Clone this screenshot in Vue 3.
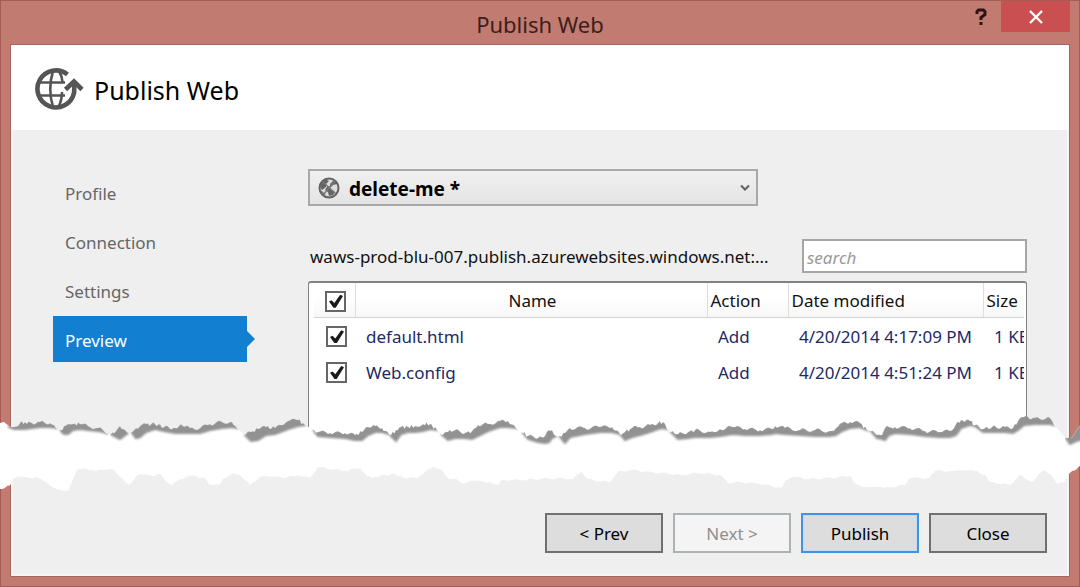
<script setup>
import { ref, computed } from 'vue'

const steps = ['Profile', 'Connection', 'Settings', 'Preview']
const active = ref('Preview')
const profile = ref('delete-me')
const search = ref('')
const files = ref([
  { name: 'default.html', action: 'Add', date: '4/20/2014 4:17:09 PM', size: '1 KB', checked: true },
  { name: 'Web.config', action: 'Add', date: '4/20/2014 4:51:24 PM', size: '1 KB', checked: true }
])
const allChecked = computed({
  get: () => files.value.every((f) => f.checked),
  set: (v) => files.value.forEach((f) => { f.checked = v })
})

// Torn paper: each ridge is a list of [x, top, thickness]
const ridges = [
  [[9, 426, 1], [14, 427, 2], [20, 423, 6], [25, 422, 7], [32, 423, 5], [40, 422, 5], [50, 423, 4], [56, 428, 0]],
  [[61, 430, 1], [64, 426, 8], [68, 424, 10], [73, 424, 6], [80, 424, 5], [88, 426, 4], [98, 428, 3], [108, 433, 0]],
  [[111, 434, 0], [116, 431, 6], [120, 426, 13], [124, 429, 7], [128, 433, 0]],
  [[132, 432, 1], [136, 428, 10], [140, 426, 11], [146, 424, 8], [155, 424, 5], [164, 427, 4], [175, 428, 5], [182, 425, 8], [190, 428, 5], [200, 428, 5], [210, 424, 6], [222, 422, 6], [232, 422, 5], [237, 428, 0]],
  [[245, 435, 0], [251, 432, 9], [258, 429, 11], [266, 427, 8], [275, 428, 6], [283, 425, 6], [288, 421, 8], [298, 420, 6], [305, 425, 0]],
  [[314, 430, 1], [318, 432, 4], [330, 433, 4], [345, 433, 5], [355, 435, 5], [362, 432, 8], [368, 427, 8], [375, 426, 6], [382, 428, 4], [389, 434, 0]],
  [[391, 435, 1], [396, 430, 11], [401, 427, 7], [408, 427, 5], [415, 426, 6], [423, 424, 7], [430, 424, 5], [437, 430, 0]],
  [[441, 434, 0], [448, 432, 8], [455, 430, 8], [465, 433, 5], [472, 431, 8], [478, 425, 11], [488, 424, 7], [500, 421, 6], [508, 421, 6], [516, 428, 0]],
  [[523, 433, 0], [528, 436, 3], [538, 438, 4], [545, 436, 7], [549, 430, 12], [552, 430, 8], [556, 436, 0]],
  [[560, 436, 1], [565, 433, 10], [570, 428, 9], [585, 428, 6], [600, 427, 5], [612, 427, 5], [620, 434, 0]],
  [[621, 435, 0], [625, 432, 8], [632, 428, 9], [640, 427, 8], [650, 425, 7], [658, 423, 6], [663, 422, 6], [667, 429, 0]],
  [[671, 432, 0], [678, 434, 5], [688, 432, 6], [695, 430, 7], [710, 432, 5], [720, 429, 7], [733, 427, 7], [745, 429, 6], [760, 430, 5], [772, 429, 5], [775, 426, 7], [785, 428, 6], [800, 430, 5], [815, 430, 6], [830, 431, 5], [836, 428, 7], [842, 423, 8], [850, 422, 6], [860, 423, 4], [867, 430, 0]],
  [[871, 431, 0], [877, 435, 3], [882, 435, 4], [885, 428, 12], [889, 427, 8], [895, 427, 6], [910, 428, 6], [925, 431, 5], [940, 432, 5], [950, 431, 6], [956, 424, 11], [961, 420, 8], [970, 421, 4], [975, 425, 1], [983, 429, 3], [992, 427, 5], [1005, 427, 5], [1013, 428, 5], [1018, 421, 9], [1024, 417, 8], [1035, 418, 6], [1050, 418, 6], [1054, 425, 0]],
  [[1066, 438, 0], [1070, 438, 6], [1076, 431, 10], [1084, 424, 15]]
]
const lowerEdge = [
  [0, 489], [6, 487], [11, 484], [14, 478], [18, 476], [28, 478], [36, 477], [45, 481], [50, 486], [55, 488], [62, 491], [69, 490], [73, 479], [78, 469],
  [86, 469], [95, 471], [105, 470], [112, 469], [120, 477], [129, 485], [138, 475], [145, 474], [152, 476], [160, 474], [168, 483], [172, 485], [180, 479],
  [192, 476], [205, 478], [209, 484], [219, 485], [224, 478], [232, 474], [240, 475], [250, 485], [260, 477], [272, 476], [285, 478], [298, 475], [310, 478],
  [318, 467], [330, 469], [345, 471], [360, 468], [366, 475], [373, 478], [382, 475], [395, 474], [404, 478], [418, 478], [425, 472], [433, 467], [440, 469],
  [448, 478], [458, 480], [461, 483], [475, 481], [490, 482], [498, 485], [502, 480], [520, 480], [540, 479], [560, 478], [572, 479], [581, 472], [588, 479],
  [600, 481], [610, 482], [618, 472], [632, 470], [650, 472], [670, 474], [680, 475], [700, 473], [720, 475], [728, 483], [740, 482], [760, 484], [782, 488],
  [786, 480], [792, 477], [810, 479], [830, 478], [850, 476], [855, 483], [862, 487], [885, 488], [905, 485], [910, 478], [928, 478], [935, 471], [950, 471],
  [975, 471], [985, 475], [990, 482], [1010, 485], [1020, 475], [1032, 482], [1043, 470], [1050, 474], [1058, 484], [1065, 481], [1069, 474], [1080, 466]
]

function roughen(points, amount) {
  const out = []
  for (let i = 0; i < points.length - 1; i++) {
    const [x0, y0] = points[i]
    const [x1, y1] = points[i + 1]
    const n = Math.max(1, Math.round((x1 - x0) / 2))
    for (let k = 0; k < n; k++) {
      const x = x0 + ((x1 - x0) * k) / n
      const noise = k ? Math.sin(x * 12.9898) * amount : 0
      out.push([x, y0 + ((y1 - y0) * k) / n + noise])
    }
  }
  out.push(points[points.length - 1])
  return out
}
const text = (points) => points.map(([x, y]) => `${x.toFixed(1)},${y.toFixed(1)}`).join(' ')
const ridgeTops = ridges.map((r) => roughen(r.map(([x, y]) => [x, y]), 1.8))
const shadows = ridges.map((r, i) => text([...ridgeTops[i], ...r.map(([x, y, t]) => [x, y + t]).reverse()]))
const gap = text([[0, 423], [4, 422], ...ridgeTops.flat(), ...roughen(lowerEdge, 0.8).reverse()])
</script>

<template>
  <div class="window">
    <header class="titlebar">
      <span class="caption">Publish Web</span>
      <div class="controls">
        <button class="help" aria-label="Help">
          <svg width="12" height="18" viewBox="0 0 12 18"><path d="M2 6V3.5L3.5 2h5L10 3.5v3L6 9.500v2.500M6 14v3" fill="none" stroke="#2a1414" stroke-width="3" /></svg>
        </button>
        <button class="close" aria-label="Close window">
          <svg width="16" height="14" viewBox="0 0 16 14"><path d="M2 1l12 12M14 1L2 13" stroke="#fff" stroke-width="2.400" /></svg>
        </button>
      </div>
    </header>

    <div class="dialog">
      <div class="heading">
        <svg class="globe" width="50" height="44" viewBox="0 0 50 44" fill="none" stroke="#555">
          <path d="M33.500 7.500A18.500 18.500 0 1 0 40 26Q40.500 21 40 15" stroke-width="4.600" />
          <path d="M19 4Q13.500 22 19 40M25 4Q28 9 28.500 15M28 25Q28 33 24.500 40M4 15.500H31M4 28.500H31" stroke-width="2.600" />
          <path d="M31.500 22.500L40 14.500l8 8" stroke-width="4.600" />
        </svg>
        <h1>Publish Web</h1>
      </div>

      <div class="body">
        <nav class="steps">
          <button v-for="s in steps" :key="s" :class="{ active: s === active }" @click="active = s">{{ s }}</button>
        </nav>

        <main class="panel">
          <label class="picker">
            <svg width="22" height="22" viewBox="0 0 22 22">
              <circle cx="11" cy="11" r="9.500" fill="#ddd" stroke="#626262" stroke-width="2" />
              <path d="M3 5l4-3 4 2-3 3v3L4 13 2 10zM12 7l4-4 3 4-4 1-2 2zM9 10l3-1 1 3 4 3-2 3-4 1-1-4-3-2z" fill="#646464" />
              <path d="M4 4l14 13M17 4L5 18M3 14l4 4" stroke="#777" stroke-width="1.500" />
            </svg>
            <select v-model="profile" aria-label="Publish profile">
              <option value="delete-me">delete-me *</option>
            </select>
            <svg width="10" height="8" viewBox="0 0 10 8"><path d="M1 1.500l4 4 4-4" fill="none" stroke="#606060" stroke-width="2" /></svg>
          </label>

          <div class="target">
            <span>waws-prod-blu-007.publish.azurewebsites.windows.net:...</span>
            <input v-model="search" type="text" placeholder="search" aria-label="Search files" />
          </div>

          <div class="list">
            <table>
              <colgroup>
                <col class="c-check" /><col /><col class="c-action" /><col class="c-date" /><col class="c-size" />
              </colgroup>
              <thead>
                <tr>
                  <th><input v-model="allChecked" type="checkbox" aria-label="Select all files" /></th>
                  <th class="name">Name</th>
                  <th>Action</th>
                  <th>Date modified</th>
                  <th>Size</th>
                </tr>
              </thead>
              <tbody>
                <tr v-for="f in files" :key="f.name">
                  <td><input v-model="f.checked" type="checkbox" :aria-label="'Publish ' + f.name" /></td>
                  <td>{{ f.name }}</td>
                  <td>{{ f.action }}</td>
                  <td>{{ f.date }}</td>
                  <td>{{ f.size }}</td>
                </tr>
              </tbody>
            </table>
          </div>
        </main>
      </div>

      <footer class="actions">
        <button>&lt; Prev</button>
        <button disabled>Next &gt;</button>
        <button class="primary">Publish</button>
        <button>Close</button>
      </footer>
    </div>

    <svg class="tear" viewBox="0 410 1080 90" preserveAspectRatio="none" aria-hidden="true">
      <defs>
        <filter id="soft" x="-5%" y="-30%" width="110%" height="160%"><feGaussianBlur stdDeviation="0.9" /></filter>
        <clipPath id="band"><polygon :points="gap" /></clipPath>
      </defs>
      <polygon :points="gap" fill="#fff" />
      <g clip-path="url(#band)">
        <polygon v-for="(s, i) in shadows" :key="i" :points="s" fill="#929292" stroke="#929292" stroke-width="2" filter="url(#soft)" />
      </g>
    </svg>
  </div>
</template>

<style>
body {
  margin: 0;
}
</style>

<style scoped>
.window {
  position: relative;
  display: flex;
  flex-direction: column;
  box-sizing: border-box;
  min-height: 100vh;
  padding: 0 9px 9px;
  border: 1px solid #a45c55;
  background: #c17b70;
  font-family: "Noto Sans", "Open Sans", sans-serif;
  font-size: 17px;
  line-height: 24px;
  color: #111;
}
button, input, select {
  font: inherit;
  color: inherit;
}
button {
  cursor: pointer;
}
.titlebar {
  display: grid;
  grid-template-columns: 1fr auto 1fr;
  height: 43px;
}
.caption {
  grid-column: 2;
  padding-top: 11px;
  font-size: 22px;
  color: #3a1f1c;
}
.controls {
  display: flex;
  justify-content: flex-end;
  align-items: flex-start;
}
.controls button {
  display: flex;
  align-items: center;
  justify-content: center;
  height: 31px;
  padding: 0;
  border: 0;
  background: none;
}
.controls .help {
  width: 40px;
}
.controls .close {
  width: 69px;
  background: #c94f50;
}
.dialog {
  flex: 1;
  display: flex;
  flex-direction: column;
  border: 1px solid #a8645c;
  background: #efefef;
  box-shadow: inset 0 0 0 2px #f8f6f5;
}
.heading {
  display: flex;
  align-items: center;
  gap: 10px;
  box-sizing: border-box;
  height: 85px;
  padding: 2px 0 0 23px;
  background: #fff;
}
h1 {
  margin: 0;
  padding-top: 2px;
  font-size: 25px;
  font-weight: 400;
  line-height: 36px;
  color: #000;
}
.body {
  flex: 1;
  display: flex;
  gap: 61px;
  padding: 39px 42px 0;
}
.steps {
  display: flex;
  flex-direction: column;
  gap: 3px;
  width: 194px;
}
.steps button {
  position: relative;
  height: 46px;
  padding: 3px 12px 0;
  border: 0;
  background: none;
  text-align: left;
  color: #666;
}
.steps .active {
  background: #127fd1;
  color: #fff;
}
.steps .active::after {
  content: "";
  position: absolute;
  left: 100%;
  top: 15px;
  border: 8px solid transparent;
  border-left-color: #127fd1;
  border-right-width: 0;
}
.panel {
  flex: 1;
  min-width: 0;
  display: flex;
  flex-direction: column;
}
.picker {
  display: flex;
  align-items: center;
  gap: 9px;
  box-sizing: border-box;
  width: 450px;
  height: 37px;
  padding: 0 6px 0 8px;
  border: 2px solid #a9a9a9;
  background: linear-gradient(#f0f0f0, #e4e4e4);
}
.picker select {
  flex: 1;
  appearance: none;
  padding: 2px 0 0;
  border: 0;
  background: none;
  font-size: 19px;
  font-weight: 700;
  color: #000;
}
.target {
  display: flex;
  align-items: center;
  justify-content: space-between;
  margin-top: 33px;
  padding-left: 2px;
  white-space: nowrap;
}
.target span {
  padding-top: 2px;
}
.target input {
  box-sizing: border-box;
  width: 225px;
  height: 34px;
  padding: 2px 3px 0;
  border: 2px solid #a6a6a6;
  background: #fff;
}
.target input::placeholder {
  font-style: italic;
  color: #999;
  opacity: 1;
}
.list {
  flex: 1;
  margin-top: 8px;
  padding: 0 2px 0 5px;
  overflow: hidden;
  border: 1px solid #828282;
  border-top-width: 2px;
  border-radius: 3px;
  background: #fff;
}
table {
  width: 100%;
  table-layout: fixed;
  border-collapse: collapse;
}
.c-check { width: 41px; }
.c-action { width: 81px; }
.c-date { width: 195px; }
.c-size { width: 41px; }
th, td {
  box-sizing: border-box;
  height: 36px;
  padding: 3px 0 0 11px;
  overflow: hidden;
  text-align: left;
  font-weight: 400;
  white-space: nowrap;
  color: #1c2a66;
}
th {
  height: 34px;
  padding-left: 3px;
  border-bottom: 1px solid #d2d2d2;
  background: linear-gradient(#fff 40%, #f7f7f7);
  color: #111;
}
th + th {
  border-left: 1px solid #dedede;
}
th.name {
  text-align: center;
}
th:first-child {
  padding-left: 11px;
}
td:first-child {
  padding-left: 12px;
}
input[type="checkbox"] {
  appearance: none;
  display: block;
  box-sizing: border-box;
  width: 21px;
  height: 21px;
  margin: 0;
  border: 2px solid #666;
  background: #fff;
}
input[type="checkbox"]:checked::before {
  content: "";
  display: block;
  width: 14px;
  height: 13px;
  margin: 2px;
  background: #1a1a1a;
  clip-path: polygon(0 52%, 18% 42%, 38% 64%, 80% 0, 100% 10%, 48% 100%, 32% 100%);
}
.actions {
  display: flex;
  justify-content: flex-end;
  align-items: flex-start;
  gap: 10px;
  height: 63px;
  padding: 63px 22px 0 0;
}
.actions button {
  width: 118px;
  height: 40px;
  padding: 2px 0 0;
  border: 2px solid #707070;
  background: #dddddd;
  color: #000;
}
.actions button:disabled {
  border-color: #adb2b5;
  background: #f4f4f4;
  color: #8f8f8f;
}
.actions .primary {
  border-color: #4393e0;
  box-shadow: inset 0 0 0 1px #c3dcf3;
}
.tear {
  position: absolute;
  left: -1px;
  bottom: 86px;
  width: calc(100% + 2px);
  height: 90px;
  pointer-events: none;
}
</style>
